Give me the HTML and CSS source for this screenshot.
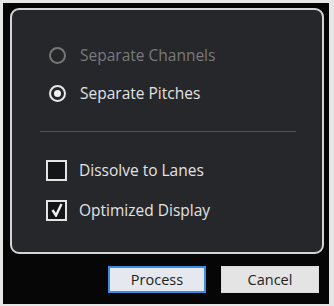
FILE: index.html
```html
<!DOCTYPE html>
<html lang="en">

<head>
  <meta charset="UTF-8" />
  <meta name="viewport" content="width=device-width, initial-scale=1.0" />
  <title>Process</title>
  <link rel="stylesheet" href="styles.css">
</head>

<body>
  <div class="window">
    <div class="panel">
      <div class="option disabled">
        <span class="radio"></span>
        <span class="label">Separate Channels</span>
      </div>
      <div class="option">
        <span class="radio checked"></span>
        <span class="label">Separate Pitches</span>
      </div>

      <div class="separator"></div>

      <div class="option tall">
        <span class="check"></span>
        <span class="label">Dissolve to Lanes</span>
      </div>
      <div class="option tall">
        <span class="check">
          <svg width="14" height="14" viewBox="0 0 14 14">
            <path d="M2.5 7 L6 12.5 L11.5 1" fill="none" stroke="#f0f0f0" stroke-width="2.4" />
          </svg>
        </span>
        <span class="label">Optimized Display</span>
      </div>
    </div>

    <div class="buttons">
      <button class="btn default">Process</button>
      <button class="btn">Cancel</button>
    </div>
  </div>
</body>

</html>
```

FILE: styles.css
```css
* {
  box-sizing: border-box;
}

body {
  margin: 0;
  background: #e6e6e6;
  font-family: 'Open Sans', sans-serif;
  width: 334px;
  height: 306px;
  padding: 3px 5px 2px 3px;
}

.window {
  background: #060606;
  height: 100%;
  padding: 5px 5px 0 7px;
}

.panel {
  height: 246px;
  border: 2px solid #d4d4d4;
  border-radius: 9px;
  background: #25272b;
  padding: 26px 0 0 34px;
  display: flex;
  flex-direction: column;
}

.option {
  height: 38px;
  display: flex;
  align-items: center;
  gap: 12px;
  color: #e2e2e2;
  font-size: 15.5px;
}

.option.tall {
  height: 40px;
}

.option.disabled {
  color: #7a7a7a;
}

.radio {
  width: 22px;
  display: flex;
  justify-content: center;
}

.radio::before {
  content: "";
  width: 17px;
  height: 17px;
  border: 2px solid #e8e8e8;
  border-radius: 50%;
  box-sizing: border-box;
}

.disabled .radio::before {
  border-color: #777;
}

.radio.checked {
  position: relative;
}

.radio.checked::after {
  content: "";
  position: absolute;
  left: 7.5px;
  top: 5px;
  width: 7px;
  height: 7px;
  border-radius: 50%;
  background: #f2f2f2;
}

.check {
  width: 21px;
  height: 21px;
  border: 2px solid #e4e4e4;
  background: #141517;
  display: flex;
  align-items: center;
  justify-content: center;
}

.separator {
  height: 1px;
  background: #505358;
  margin: 19px 26px 18px -6px;
}

.buttons {
  display: flex;
  justify-content: flex-end;
  gap: 15px;
  padding: 12px 5px 0 0;
}

.btn {
  width: 98px;
  height: 27px;
  border: 1px solid #dcdcdc;
  background: #e4e4e4;
  color: #222;
  font-family: 'Open Sans', sans-serif;
  font-size: 14.5px;
  padding: 0;
}

.btn.default {
  border: 2px solid #3a8ee0;
  background: #e6e8ef;
}
```
